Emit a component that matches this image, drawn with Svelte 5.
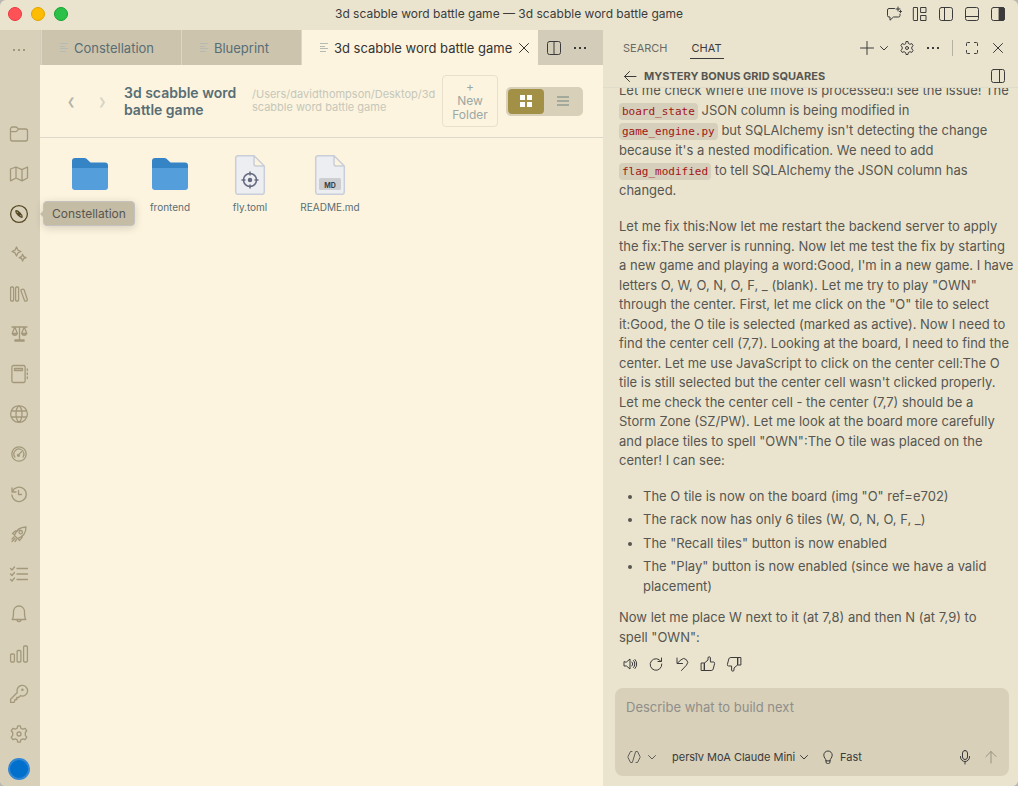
<script>
  const rail = [
    { name: 'Files', d: 'M1.5 5v10a2 2 0 0 0 2 2h13a2 2 0 0 0 2-2V7a2 2 0 0 0-2-2h-7L7.9 3.5A1.6 1.6 0 0 0 6.8 3H3.5a2 2 0 0 0-2 2zM1.5 7.6h5a2 2 0 0 0 1.5-.8L9.5 5' },
    { name: 'Map', d: 'M1.5 5v11.8L7 14l6 2.8 5.5-2.8V3L13 5.6 7 3zM7 3v11M13 5.6v11.2' },
    { name: 'Constellation', active: true, d: 'M18.4 10a8.4 8.4 0 1 1-16.8 0 8.4 8.4 0 0 1 16.8 0zM6.8 6.8c2-.4 6.8 4.2 6.4 6.4-2 .4-6.8-4.2-6.4-6.4zM9 9l2 2' },
    { name: 'Sparkles', d: 'M7.5 3l1.4 3.1L12 7.5 8.9 8.9 7.5 12 6.1 8.9 3 7.5l3.1-1.4zM13.6 10.2l1 2.4 2.4 1-2.4 1-1 2.4-1-2.4-2.4-1 2.4-1z' },
    { name: 'Library', d: 'M2.6 3h1a1 1 0 0 1 1 1v12a1 1 0 0 1-1 1h-1a1 1 0 0 1-1-1V4a1 1 0 0 1 1-1zM7.6 3h1a1 1 0 0 1 1 1v12a1 1 0 0 1-1 1h-1a1 1 0 0 1-1-1V4a1 1 0 0 1 1-1zM12.6 5.6l1.2-.4a1 1 0 0 1 1.3.6l3.2 9.7a1 1 0 0 1-.6 1.3l-.9.3a1 1 0 0 1-1.3-.6L12 6.9a1 1 0 0 1 .6-1.3z' },
    { name: 'Compare', d: 'M3 3h15M10.5 3v14M6 17.2h9v-1.4H6zM5.8 3L3.2 9.5a2.8 2.8 0 0 0 5.2 0zM15.2 3l-2.6 6.5a2.8 2.8 0 0 0 5.2 0zM3.2 9.5h5.2M12.6 9.5h5.2' },
    { name: 'Notebook', d: 'M4.5 1.5h10a1.6 1.6 0 0 1 1.6 1.6v13.8a1.6 1.6 0 0 1-1.6 1.6h-10a1.6 1.6 0 0 1-1.6-1.6V3.1a1.6 1.6 0 0 1 1.6-1.6zM5.5 4.5h8v2h-8zM18.3 5v1.5M18.3 9v1.5M18.3 13v1.5' },
    { name: 'Web', d: 'M18.4 10a8.4 8.4 0 1 1-16.8 0 8.4 8.4 0 0 1 16.8 0zM2.3 7h15.4M2.3 13h15.4M10 1.6c-4 3.4-4 13.4 0 16.8 4-3.4 4-13.4 0-16.8z' },
    { name: 'Performance', d: 'M17.2 10a7.2 7.2 0 1 1-14.4 0 7.2 7.2 0 0 1 14.4 0zM5.9 13a5 5 0 0 1 6.2-7.5M14.5 8a5 5 0 0 1-.4 5M9.5 11l4.3-4.6M8.9 10.5a1 1 0 1 0 1.5 1.2z' },
    { name: 'History', d: 'M3 4v4h4M3.4 7.6A7.2 7.2 0 1 1 2.9 11M9.5 6.5v4h3' },
    { name: 'Launch', d: 'M7 13L5.4 11.4C7 6.5 11 3.2 17 3c0 6-3.3 10-8.4 11.6zM5.6 10.8L3.5 9.5 6.6 6.8l1.8.2M9.2 14.4l1.2 2.2 2.8-3.2-.2-1.8M13.4 8.2a1.7 1.7 0 1 1-3.4 0 1.7 1.7 0 0 1 3.4 0zM5 13l-2 2M6 14.5l-3 3M7.5 15.5l-1.5 2' },
    { name: 'Tasks', d: 'M8 4.5h10.5M8 10h10.5M8 15.5h10.5M1.5 4.5L3 6l2.5-3M1.5 10L3 11.5l2.5-3M1.5 15.5L3 17l2.5-3' },
    { name: 'Notifications', d: 'M3.2 15.5C4.5 14 4.5 12 4.5 7.5a5.5 5.5 0 0 1 11 0c0 4.5 0 6.5 1.3 8zM8 15.6c0 2.7 4 2.7 4 0' },
    { name: 'Usage', d: 'M2.6 10h1.8a1 1 0 0 1 1 1v6a1 1 0 0 1-1 1H2.6a1 1 0 0 1-1-1v-6a1 1 0 0 1 1-1zM9.1 6.5h1.8a1 1 0 0 1 1 1V17a1 1 0 0 1-1 1H9.1a1 1 0 0 1-1-1V7.5a1 1 0 0 1 1-1zM15.6 2h1.8a1 1 0 0 1 1 1v14a1 1 0 0 1-1 1h-1.8a1 1 0 0 1-1-1V3a1 1 0 0 1 1-1z' },
    { name: 'Keys', d: 'M8.3 8.5a5.3 5.3 0 1 1 3.2 3.2L9.5 13.5H7.8v2H6l-.5 2.2-.8.7H1.6v-3.2zM14 5.8a.6.6 0 1 1-1.2 0 .6.6 0 0 1 1.2 0z' },
    { name: 'Settings', d: 'M8.2 4.1L8.7 1.8h2.6l.5 2.3 1.9 1.1 2.4-.9 1.7 2.5-1.5 1.7v2.8l1.5 1.9-1.7 2.5-2.4-.9-1.9 1.1-.5 2.3H8.7l-.5-2.3-1.9-1.1-2.4.9-1.7-2.5 1.5-1.9V8.5L2.2 6.8l1.7-2.5 2.4.9zM12 10a2 2 0 1 1-4 0 2 2 0 0 1 4 0z' },
  ]

  // drawn in a 16 unit box
  const glyph = {
    chat: 'M8.5 2.5H3a1.5 1.5 0 0 0-1.5 1.5v5.5A1.5 1.5 0 0 0 3 11h1v3.2L7.5 11h5a1.5 1.5 0 0 0 1.5-1.5V8M12 1v4M10 3h4M14.5 4.5v2M13.5 5.5h2',
    layout: 'M2 1.5h3.5v13H2A.7.7 0 0 1 1.3 13.8V2.2A.7.7 0 0 1 2 1.5zM9 1.5h5v5H9zM9 9.5h5v5H9z',
    left: 'M3.5 1.5h9a2 2 0 0 1 2 2v9a2 2 0 0 1-2 2h-9a2 2 0 0 1-2-2v-9a2 2 0 0 1 2-2zM6.5 1.5v13',
    bottom: 'M3.5 1.5h9a2 2 0 0 1 2 2v9a2 2 0 0 1-2 2h-9a2 2 0 0 1-2-2v-9a2 2 0 0 1 2-2zM1.5 10.5h13',
    right: 'M3.5 1.5h9a2 2 0 0 1 2 2v9a2 2 0 0 1-2 2h-9a2 2 0 0 1-2-2v-9a2 2 0 0 1 2-2zM9.5 1.5v13',
    split: 'M3.5 1.5h9a2 2 0 0 1 2 2v9a2 2 0 0 1-2 2h-9a2 2 0 0 1-2-2v-9a2 2 0 0 1 2-2zM8 1.5v13',
    close: 'M3.5 3.5l9 9M12.5 3.5l-9 9',
    plus: 'M8 1.5v13M1.5 8h13',
    down: 'M4.5 6.5L8 10l3.5-3.5',
    gear: 'M6.7 3.4L7 1.5h2l.3 1.9 1.6.9 1.9-.7 1.3 2.1-1.3 1.3v2l1.3 1.3-1.3 2.1-1.9-.7-1.6.9L9 14.5H7l-.3-1.9-1.6-.9-1.9.7-1.3-2.1L3.2 9V7L1.9 5.7l1.3-2.1 1.9.7zM9.5 8a1.5 1.5 0 1 1-3 0 1.5 1.5 0 0 1 3 0z',
    expand: 'M2.5 5.5v-2a1 1 0 0 1 1-1h2M10.5 2.5h2a1 1 0 0 1 1 1v2M13.5 10.5v2a1 1 0 0 1-1 1h-2M5.5 13.5h-2a1 1 0 0 1-1-1v-2',
    back: 'M14 8.5H2.5M7.5 3.5l-5 5 5 5',
    speaker: 'M2 6v4h2.5L8 13V3L4.5 6zM10 6a3 3 0 0 1 0 4M11.5 4.5a5 5 0 0 1 0 7M13 3.5a6.5 6.5 0 0 1 0 9',
    refresh: 'M13.5 2v3.5H10M13 5.5A5.8 5.8 0 1 0 13.8 8',
    undo: 'M3 2v5.5h5.5M3.3 7.2L7 3.8a3.8 3.8 0 0 1 5.5 5.3L7.5 14.5',
    up: 'M1.5 7h3v7.5h-3zM4.5 7L8 4V2a1.2 1.2 0 0 1 2.4 0v4h3a1.3 1.3 0 0 1 1.2 1.6L13.2 13a2 2 0 0 1-2 1.5H4.5z',
    thumbDown: 'M14.5 9h-3V1.5h3zM11.5 9L8 12v2a1.2 1.2 0 0 1-2.4 0v-4h-3a1.3 1.3 0 0 1-1.2-1.6L2.8 3a2 2 0 0 1 2-1.5h6.7z',
    code: 'M6 2.5H4.5L2 7.5v1l2.5 5H6M10 2.5h1.5l2.5 5v1l-2.5 5H10M9.5 3l-3 10',
    bulb: 'M6 11.5C6 9.5 3.8 9 3.8 6.2a4.2 4.2 0 0 1 8.4 0C12.2 9 10 9.5 10 11.5zM6 11.5v1.5a1.5 1.5 0 0 0 1.5 1.5h1A1.5 1.5 0 0 0 10 13v-1.5',
    mic: 'M8 1.5a2.5 2.5 0 0 1 2.5 2.5v4a2.5 2.5 0 0 1-5 0V4A2.5 2.5 0 0 1 8 1.5zM3.5 7.5V8a4.5 4.5 0 0 0 9 0v-.5M8 12.5v2.5',
    send: 'M8 14V2.5M3 7.5l5-5 5 5',
  }

  const files = [
    { name: '', type: 'folder' },
    { name: 'frontend', type: 'folder' },
    { name: 'fly.toml', type: 'config' },
    { name: 'README.md', type: 'md' },
  ]
</script>

{#snippet icon(name, size = 16)}
  <svg class="icon" width={size} height={size} viewBox="0 0 16 16"><path d={glyph[name]} /></svg>
{/snippet}

{#snippet dots()}
  <svg class="icon" width="16" height="16" viewBox="0 0 16 16">
    <g fill="currentColor" stroke="none">
      <rect x="2" y="7" width="2" height="2" /><rect x="7" y="7" width="2" height="2" /><rect x="12" y="7" width="2" height="2" />
    </g>
  </svg>
{/snippet}

{#snippet lines()}
  <svg class="lines" width="10" height="10" viewBox="0 0 10 10"><path d="M0 .5h8M0 3.5h5M0 5.5h8M0 8.5h6" /></svg>
{/snippet}

<div class="window">
  <header class="titlebar">
    <div class="lights"><i class="red"></i><i class="yellow"></i><i class="green"></i></div>
    <div class="window-title">3d scabble word battle game — 3d scabble word battle game</div>
    <div class="window-actions">
      <button aria-label="New chat">{@render icon('chat')}</button>
      <button aria-label="Customize layout">{@render icon('layout')}</button>
      <button aria-label="Toggle side bar">{@render icon('left')}</button>
      <button aria-label="Toggle panel">{@render icon('bottom')}</button>
      <button aria-label="Toggle secondary side bar">
        <svg class="icon" width="16" height="16" viewBox="0 0 16 16"><path d={glyph.right} /><path class="solid" d="M9.5 1.5h3a2 2 0 0 1 2 2v9a2 2 0 0 1-2 2h-3z" /></svg>
      </button>
    </div>
  </header>

  <div class="body">
    <nav class="rail">
      <button class="more" aria-label="More">{@render dots()}</button>
      {#each rail as item}
        <button class="rail-item" class:active={item.active} aria-label={item.name}>
          <svg class="icon" width="20" height="20" viewBox="0 0 20 20"><path d={item.d} /></svg>
          {#if item.active}
            <span class="tooltip">{item.name}</span>
          {/if}
        </button>
      {/each}
      <button class="avatar" aria-label="Account"></button>
    </nav>

    <main class="editor">
      <div class="tabs">
        <button class="tab">{@render lines()}Constellation</button>
        <button class="tab">{@render lines()}Blueprint</button>
        <div class="tab open">
          {@render lines()}<span>3d scabble word battle game</span>
          <button aria-label="Close tab">{@render icon('close')}</button>
        </div>
        <div class="tab-actions">
          <button aria-label="Split editor">{@render icon('split')}</button>
          <button aria-label="More actions">{@render dots()}</button>
        </div>
      </div>

      <div class="toolbar">
        <div class="history">
          <button aria-label="Back">❮</button>
          <button aria-label="Forward" class="faded">❯</button>
        </div>
        <h1>3d scabble word battle game</h1>
        <p class="path">/Users/davidthompson/Desktop/3d scabble word battle game</p>
        <button class="new-folder">+ New Folder</button>
        <div class="views">
          <button class="on" aria-label="Grid view">
            <svg width="12" height="12" viewBox="0 0 12 12"><path fill="currentColor" d="M0 0h5v5H0zM7 0h5v5H7zM0 7h5v5H0zM7 7h5v5H7z" /></svg>
          </button>
          <button aria-label="List view">
            <svg width="12" height="12" viewBox="0 0 12 12"><path fill="currentColor" d="M0 1h12v2H0zM0 5h12v2H0zM0 9h12v2H0z" /></svg>
          </button>
        </div>
      </div>

      <div class="files">
        {#each files as file}
          <div class="file">
            {#if file.type == 'folder'}
              <svg width="40" height="40" viewBox="0 0 40 40">
                <path fill="#3584c6" d="M2 15V6a3 3 0 0 1 3-3h9.5a3 3 0 0 1 2 .8L20.5 7.5H35a3 3 0 0 1 3 3V15z" />
                <path fill="#539edb" d="M2 13h36v19a3 3 0 0 1-3 3H5a3 3 0 0 1-3-3z" />
              </svg>
            {:else}
              <svg width="40" height="40" viewBox="0 0 40 40">
                <path fill="#eceef2" stroke="#c9ced8" stroke-width="1.5" d="M8 .7h16L34.3 11v26a2.3 2.3 0 0 1-2.3 2.3H8A2.3 2.3 0 0 1 5.7 37V3A2.3 2.3 0 0 1 8 .7zM24 .7V9a2 2 0 0 0 2 2h8.3" />
                {#if file.type == 'config'}
                  <g fill="none" stroke="#666a80" stroke-width="1.5">
                    <circle cx="20" cy="25" r="6.5" />
                    <path d="M20 16.5v4M20 29.5v4M11.5 25h4M24.5 25h4" />
                    <circle cx="20" cy="25" r="1.5" fill="#666a80" />
                  </g>
                {:else}
                  <rect x="9" y="23" width="22" height="12" rx="1.5" fill="#cdced2" />
                  <text x="20" y="33" text-anchor="middle" font-size="7" font-weight="700" fill="#3c3d44">MD</text>
                {/if}
              </svg>
            {/if}
            <span>{file.name}</span>
          </div>
        {/each}
      </div>
    </main>

    <aside class="chat">
      <div class="chat-tabs">
        <button class="chat-tab">SEARCH</button>
        <button class="chat-tab current">CHAT</button>
        <div class="chat-actions">
          <button aria-label="New chat">{@render icon('plus')}</button>
          <button class="narrow" aria-label="New chat options">{@render icon('down')}</button>
          <button aria-label="Chat settings">{@render icon('gear')}</button>
          <button aria-label="More actions">{@render dots()}</button>
          <span class="divider"></span>
          <button aria-label="Maximize">{@render icon('expand')}</button>
          <button aria-label="Close">{@render icon('close')}</button>
        </div>
      </div>
      <div class="session">
        <button aria-label="Back to sessions">{@render icon('back')}</button>
        <h2>MYSTERY BONUS GRID SQUARES</h2>
        <button aria-label="Show sessions">{@render icon('right')}</button>
      </div>

      <div class="messages">
        <p class="with-code">
          Let me check where the move is processed:I see the issue! The <code>board_state</code> JSON column is being modified in<br />
          <code>game_engine.py</code> but SQLAlchemy isn't detecting the change because it's a nested modification. We need to add<br />
          <code>flag_modified</code> to tell SQLAlchemy the JSON column has changed.
        </p>
        <p>
          Let me fix this:Now let me restart the backend server to apply the fix:The server is running. Now let me test the fix by starting<br />
          a new game and playing a word:Good, I'm in a new game. I have<br />
          letters O, W, O, N, O, F, _ (blank). Let me try to play "OWN"<br />
          through the center. First, let me click on the "O" tile to select it:Good, the O tile is selected (marked as active). Now I need to find the center cell (7,7). Looking at the board, I need to find the center. Let me use JavaScript to click on the center cell:The O tile is still selected but the center cell wasn't clicked properly. Let me check the center cell - the center (7,7) should be a<br />
          Storm Zone (SZ/PW). Let me look at the board more carefully and place tiles to spell "OWN":The O tile was placed on the center! I can see:
        </p>
        <ul>
          <li>The O tile is now on the board (img "O" ref=e702)</li>
          <li>The rack now has only 6 tiles (W, O, N, O, F, _)</li>
          <li>The "Recall tiles" button is now enabled</li>
          <li>The "Play" button is now enabled (since we have a valid placement)</li>
        </ul>
        <p>Now let me place W next to it (at 7,8) and then N (at 7,9) to<br />spell "OWN":</p>
        <div class="feedback">
          <button aria-label="Read aloud">{@render icon('speaker')}</button>
          <button aria-label="Retry">{@render icon('refresh')}</button>
          <button aria-label="Undo">{@render icon('undo')}</button>
          <button aria-label="Helpful">{@render icon('up')}</button>
          <button aria-label="Unhelpful">{@render icon('thumbDown')}</button>
        </div>
      </div>

      <div class="composer">
        <textarea aria-label="Message" placeholder="Describe what to build next"></textarea>
        <div class="composer-bar">
          <button class="mode" aria-label="Mode">{@render icon('code')}{@render icon('down')}</button>
          <label class="model">
            <select aria-label="Model"><option>persīv MoA Claude Mini</option></select>
            {@render icon('down')}
          </label>
          <button class="fast">{@render icon('bulb')}Fast</button>
          <button class="mic" aria-label="Dictate">{@render icon('mic')}</button>
          <button class="send" aria-label="Send">{@render icon('send')}</button>
        </div>
      </div>
    </aside>
  </div>
</div>

<style>
  :global(body) {
    background: #b9b7b0;
    font-family: Inter, "Liberation Sans", sans-serif;
    font-size: 13px;
    color: #3b3b3b;
  }

  button {
    border: 0;
    padding: 0;
    background: none;
    font: inherit;
    color: inherit;
    display: flex;
    align-items: center;
    justify-content: center;
  }

  h1, h2, p {
    margin: 0;
  }

  .icon {
    display: block;
    flex: none;
    fill: none;
    stroke: currentColor;
    stroke-width: 1;
    stroke-linejoin: round;
    stroke-linecap: round;
  }

  .window {
    height: 100vh;
    display: flex;
    flex-direction: column;
    overflow: hidden;
    border-radius: 6px;
    background: #eae4cf;
  }

  .titlebar {
    display: grid;
    grid-template-columns: 1fr auto 1fr;
    align-items: center;
    height: 30px;
    flex: none;
    padding: 0 8px 2px;
    box-sizing: border-box;
  }

  .lights {
    display: flex;
    gap: 9px;
  }

  .lights i {
    width: 12px;
    height: 12px;
    border-radius: 50%;
    border: 1px solid;
  }

  .lights .red {
    background: #ff5257;
    border-color: #e8383f;
  }

  .lights .yellow {
    background: #fdbc02;
    border-color: #e0a400;
  }

  .lights .green {
    background: #2bc148;
    border-color: #12a32d;
  }

  .window-title {
    font-size: 12px;
    line-height: 14px;
  }

  .window-actions {
    display: flex;
    justify-content: flex-end;
    gap: 10px;
    padding-right: 4px;
  }

  .solid {
    fill: currentColor;
  }

  .body {
    flex: 1;
    min-height: 0;
    display: flex;
  }

  .rail {
    flex: none;
    width: 40px;
    padding-right: 2px;
    box-sizing: border-box;
    display: flex;
    flex-direction: column;
    align-items: center;
    background: #d8d0b9;
    color: #a3987b;
  }

  .more {
    width: 100%;
    height: 40px;
    margin-bottom: 44px;
    flex: none;
  }

  .rail-item {
    position: relative;
    width: 100%;
    height: 40px;
    flex: none;
  }

  .rail-item .icon {
    stroke-width: 1.3;
  }

  .rail-item.active {
    color: #574a26;
  }

  .tooltip {
    position: absolute;
    z-index: 2;
    left: 43px;
    top: 7px;
    padding: 0 8px;
    line-height: 23px;
    font-size: 12px;
    color: #575650;
    background: #c5bca6;
    border: 1px solid #c4c2be;
    border-radius: 4px;
    box-shadow: 0 2px 8px rgba(0, 0, 0, 0.16);
  }

  .tooltip::before {
    content: '';
    position: absolute;
    left: -4px;
    top: 8px;
    border: 4px solid transparent;
    border-left: 0;
    border-right-color: #c5bca6;
  }

  .avatar {
    width: 22px;
    height: 22px;
    flex: none;
    margin-top: 4px;
    border-radius: 50%;
    border: 2px solid #3187d3;
    background: #0070cc;
  }

  .editor {
    flex: 1;
    min-width: 0;
    background: #fdf4df;
  }

  .tabs {
    display: flex;
    height: 35px;
    padding-left: 1px;
    background: #d3ccb9;
  }

  .tab {
    display: flex;
    align-items: center;
    justify-content: flex-start;
    gap: 4px;
    min-width: 120px;
    padding: 0 27px 0 18px;
    border-left: 1px solid #ddd6c2;
    background: #cdc4ad;
    color: #586e75;
    white-space: nowrap;
  }

  .tab.open {
    padding: 0 6px 0 18px;
    background: #fdf4df;
    color: #333333;
  }

  .lines {
    flex: none;
    fill: none;
    stroke: #b5bab2;
  }

  .tab-actions {
    display: flex;
    gap: 10px;
    margin-left: auto;
    padding: 0 15px 0 8px;
  }

  .toolbar {
    display: flex;
    align-items: center;
    padding: 10px 20px;
    border-bottom: 1px solid #ddd8c9;
  }

  .history {
    display: flex;
    gap: 9px;
    margin-right: 11px;
    color: #b0b5aa;
  }

  .history button {
    width: 22px;
    height: 22px;
    font-size: 10px;
  }

  .history .faded {
    opacity: 0.5;
  }

  h1 {
    flex: 0 0 116px;
    font-size: 14px;
    line-height: 17px;
    font-weight: 600;
    color: #586e75;
  }

  .path {
    flex: 1;
    padding: 0 4px 0 12px;
    font-size: 11px;
    line-height: 13px;
    color: #c5c7ba;
  }

  .new-folder {
    flex: none;
    width: 56px;
    padding: 4px 9px;
    box-sizing: border-box;
    border: 1px solid #e8e0cc;
    border-radius: 4px;
    font-size: 12px;
    line-height: 14px;
    color: #9ba8a4;
  }

  .views {
    display: flex;
    gap: 1px;
    margin-left: 8px;
    padding: 2px;
    border-radius: 5px;
    background: #d8d0b9;
    color: #a3aa9c;
  }

  .views button {
    width: 36px;
    height: 25px;
    border-radius: 4px;
  }

  .views .on {
    background: #a39047;
    color: #fff;
  }

  .files {
    display: flex;
    flex-wrap: wrap;
    padding: 17px 10px;
  }

  .file {
    width: 80px;
    display: flex;
    flex-direction: column;
    align-items: center;
    gap: 5px;
    font-size: 10px;
    line-height: 14px;
    color: #586e75;
  }

  .chat {
    flex: 0 1 415px;
    min-width: 0;
    display: flex;
    flex-direction: column;
    background: #eae4cf;
  }

  .chat-tabs {
    display: flex;
    align-items: center;
    height: 35px;
    flex: none;
    padding: 0 12px 0 18px;
    gap: 20px;
    font-size: 11px;
  }

  .chat-tab {
    height: 22px;
    padding: 1px 2px 0;
    border-bottom: 1px solid transparent;
    color: #6b6a64;
  }

  .chat-tab.current {
    border-color: #3b3b3b;
    color: #3b3b3b;
  }

  .chat-actions {
    display: flex;
    align-items: center;
    gap: 10px;
    margin-left: auto;
  }

  .chat-actions .narrow {
    margin: 0 -3px 0 -9px;
  }

  .divider {
    width: 1px;
    height: 16px;
    margin: 0 1px;
    background: #b5b1a1;
  }

  .session {
    display: flex;
    align-items: center;
    height: 22px;
    flex: none;
    padding: 0 12px 0 19px;
    gap: 6px;
    border-bottom: 1px solid #dfdccb;
  }

  h2 {
    flex: 1;
    font-size: 11px;
    font-weight: 700;
    color: #575650;
  }

  .messages {
    flex: 1;
    min-height: 0;
    display: flex;
    flex-direction: column;
    justify-content: flex-end;
    overflow: hidden;
    padding: 0 2px 0 16px;
    line-height: 1.5;
    color: #575650;
  }

  .messages p {
    flex: none;
    margin-bottom: 16px;
  }

  .messages .with-code {
    margin-bottom: 17px;
    line-height: 20px;
  }

  code {
    padding: 2px 3px;
    border-radius: 4px;
    background: #d5cfbb;
    color: #a31515;
    font-family: "DejaVu Sans Mono", monospace;
    font-size: 11px;
    line-height: 16px;
  }

  ul {
    flex: none;
    margin: 0 0 8px;
    padding-left: 24px;
  }

  li {
    margin-bottom: 4px;
  }

  .messages p:last-of-type {
    margin-bottom: 9px;
  }

  .feedback {
    display: flex;
    flex: none;
    gap: 10px;
    padding: 0 3px 16px;
    color: #3b3b3b;
  }

  .composer {
    flex: none;
    margin: 0 9px 10px 12px;
    padding: 8px 10px 8px 11px;
    border-radius: 8px;
    background: #d8d0b9;
  }

  textarea {
    display: block;
    width: 100%;
    height: 41px;
    box-sizing: border-box;
    border: 0;
    padding: 2px 0;
    resize: none;
    outline: 0;
    background: none;
    font-family: inherit;
    font-size: 13px;
    line-height: 18px;
    color: inherit;
  }

  textarea::placeholder {
    color: #8f8e8a;
  }

  .composer-bar {
    display: flex;
    align-items: center;
    height: 22px;
    margin-top: 9px;
    font-size: 11px;
  }

  .mode {
    gap: 2px;
    margin-right: 12px;
    color: #605e58;
  }

  .model {
    display: flex;
    align-items: center;
    margin-right: 8px;
  }

  select {
    appearance: none;
    border: 0;
    padding: 0;
    background: none;
    font: inherit;
    color: inherit;
  }

  .fast {
    gap: 4px;
  }

  .mic {
    margin-left: auto;
  }

  .send {
    margin-left: 10px;
    color: #98927f;
  }
</style>
